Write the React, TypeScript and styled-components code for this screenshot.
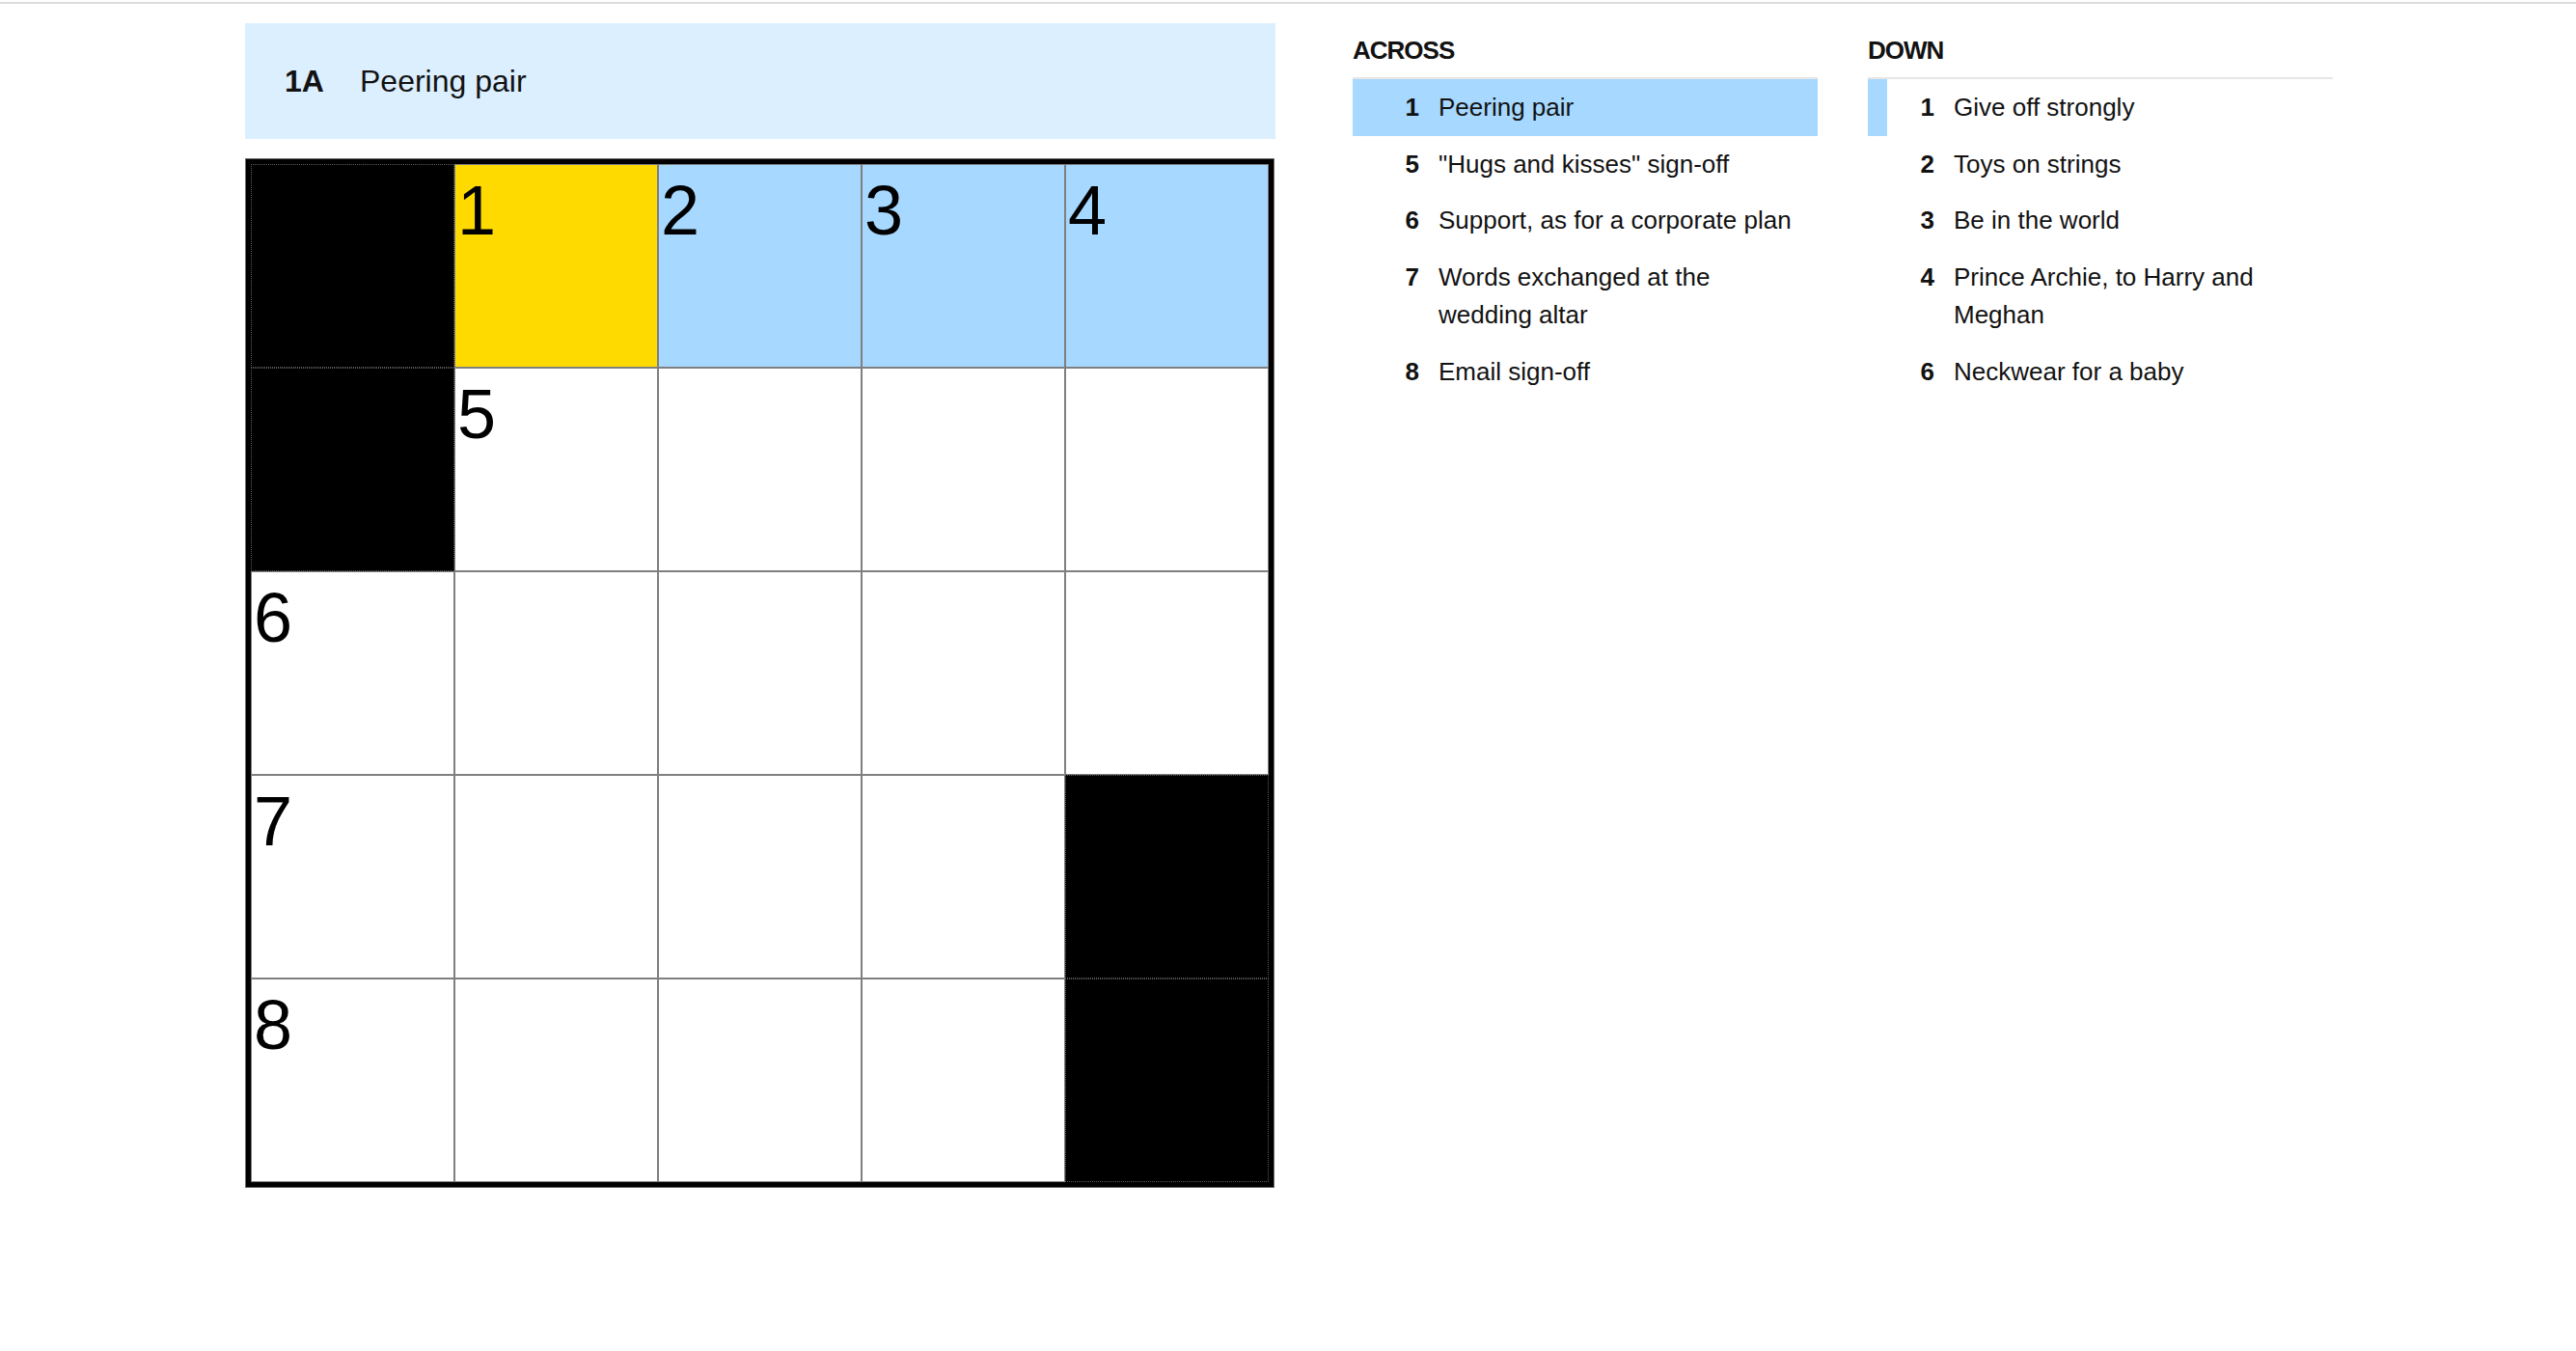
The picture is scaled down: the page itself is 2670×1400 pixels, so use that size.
import React from "react";
import styled, { createGlobalStyle, css } from "styled-components";

const GlobalStyle = createGlobalStyle`
  html, body {
    margin: 0;
    padding: 0;
    background: #ffffff;
  }
  body {
    font-family: "Liberation Sans", Arial, sans-serif;
    color: #121212;
  }
  * {
    box-sizing: border-box;
  }
`;

type CellTone = "block" | "selected" | "word" | "open";
type ClueState = "active" | "related" | "none";

const TopRule = styled.div`
  height: 2px;
  margin-top: 2px;
  background: #dcdcdc;
`;

const Layout = styled.main`
  width: 2162px;
  margin: 0 auto;
  padding-top: 20px;
  display: flex;
  align-items: flex-start;
`;

const BoardColumn = styled.section`
  width: 1068px;
  flex-shrink: 0;
  display: flex;
  flex-direction: column;
  gap: 20px;
`;

const ClueBar = styled.div`
  height: 120px;
  display: flex;
  align-items: center;
  padding-left: 41px;
  background: #dcefff;
  font-size: 32px;
  line-height: 38px;
`;

const ClueBarLabel = styled.span`
  width: 78px;
  flex-shrink: 0;
  font-weight: 700;
`;

const ClueBarText = styled.span`
  font-weight: 400;
`;

const Board = styled.div`
  display: grid;
  grid-template-columns: repeat(5, 211px);
  grid-auto-rows: 211px;
  width: 1067px;
  border: 6px solid #000000;
  outline: 1px solid #6b6b6b;
  outline-offset: -1px;
  background: #ffffff;
`;

const toneStyles: Record<CellTone, ReturnType<typeof css>> = {
  block: css`
    background: #000000;
    border: 1px dotted #5c5c5c;
  `,
  selected: css`
    background: #ffda00;
    border: 1px solid #7f7f7f;
  `,
  word: css`
    background: #a7d8ff;
    border: 1px solid #7f7f7f;
  `,
  open: css`
    background: #ffffff;
    border: 1px solid #7f7f7f;
  `,
};

const Cell = styled.div<{ $tone: CellTone }>`
  padding: 11px 0 0 2px;
  ${({ $tone }) => toneStyles[$tone]}
`;

const CellNumber = styled.span`
  display: block;
  font-family: "Liberation Sans", Arial, sans-serif;
  font-size: 72px;
  line-height: 1;
  color: #000000;
`;

const ClueLists = styled.section`
  margin-left: 80px;
  display: flex;
  gap: 52px;
`;

const ClueList = styled.div`
  width: 482px;
`;

const ListTitle = styled.h3`
  margin: 13px 0 0;
  padding-bottom: 12px;
  border-bottom: 2px solid #e6e6e6;
  font-size: 26px;
  line-height: 31px;
  font-weight: 700;
  letter-spacing: -1px;
  text-transform: uppercase;
`;

const ClueItems = styled.ol`
  list-style: none;
  margin: 0;
  padding: 0;
`;

const clueStateColor: Record<ClueState, string> = {
  active: "#a7d8ff",
  related: "#a7d8ff",
  none: "transparent",
};

const ClueItem = styled.li<{ $state: ClueState }>`
  display: flex;
  align-items: flex-start;
  padding: 10px 0;
  border-left: 20px solid ${({ $state }) => clueStateColor[$state]};
  background: ${({ $state }) => ($state === "active" ? "#a7d8ff" : "transparent")};
  font-size: 26px;
  line-height: 38.7px;
`;

const ClueNumber = styled.span`
  width: 49px;
  flex-shrink: 0;
  margin-right: 20px;
  text-align: right;
  font-weight: 700;
`;

const ClueText = styled.span`
  flex: 1;
  padding-right: 20px;
`;

const grid: string[][] = [
  ["#", "1", "2", "3", "4"],
  ["#", "5", "", "", ""],
  ["6", "", "", "", ""],
  ["7", "", "", "", "#"],
  ["8", "", "", "", "#"],
];

const selected = { row: 0, col: 1 };

function toneFor(row: number, col: number, value: string): CellTone {
  if (value === "#") return "block";
  if (row === selected.row && col === selected.col) return "selected";
  if (row === selected.row) return "word";
  return "open";
}

const across: { num: string; text: string; state: ClueState }[] = [
  { num: "1", text: "Peering pair", state: "active" },
  { num: "5", text: "\"Hugs and kisses\" sign-off", state: "none" },
  { num: "6", text: "Support, as for a corporate plan", state: "none" },
  { num: "7", text: "Words exchanged at the wedding altar", state: "none" },
  { num: "8", text: "Email sign-off", state: "none" },
];

const down: { num: string; text: string; state: ClueState }[] = [
  { num: "1", text: "Give off strongly", state: "related" },
  { num: "2", text: "Toys on strings", state: "none" },
  { num: "3", text: "Be in the world", state: "none" },
  { num: "4", text: "Prince Archie, to Harry and Meghan", state: "none" },
  { num: "6", text: "Neckwear for a baby", state: "none" },
];

function Clues({ title, items }: { title: string; items: typeof across }) {
  return (
    <ClueList>
      <ListTitle>{title}</ListTitle>
      <ClueItems>
        {items.map((c) => (
          <ClueItem key={title + c.num} $state={c.state}>
            <ClueNumber>{c.num}</ClueNumber>
            <ClueText>{c.text}</ClueText>
          </ClueItem>
        ))}
      </ClueItems>
    </ClueList>
  );
}

export default function App() {
  return (
    <>
      <GlobalStyle />
      <TopRule />
      <Layout>
        <BoardColumn>
          <ClueBar>
            <ClueBarLabel>1A</ClueBarLabel>
            <ClueBarText>Peering pair</ClueBarText>
          </ClueBar>
          <Board>
            {grid.map((row, r) =>
              row.map((value, c) => (
                <Cell key={`${r}-${c}`} $tone={toneFor(r, c, value)}>
                  {value !== "#" && value !== "" && <CellNumber>{value}</CellNumber>}
                </Cell>
              ))
            )}
          </Board>
        </BoardColumn>
        <ClueLists>
          <Clues title="Across" items={across} />
          <Clues title="Down" items={down} />
        </ClueLists>
      </Layout>
    </>
  );
}
